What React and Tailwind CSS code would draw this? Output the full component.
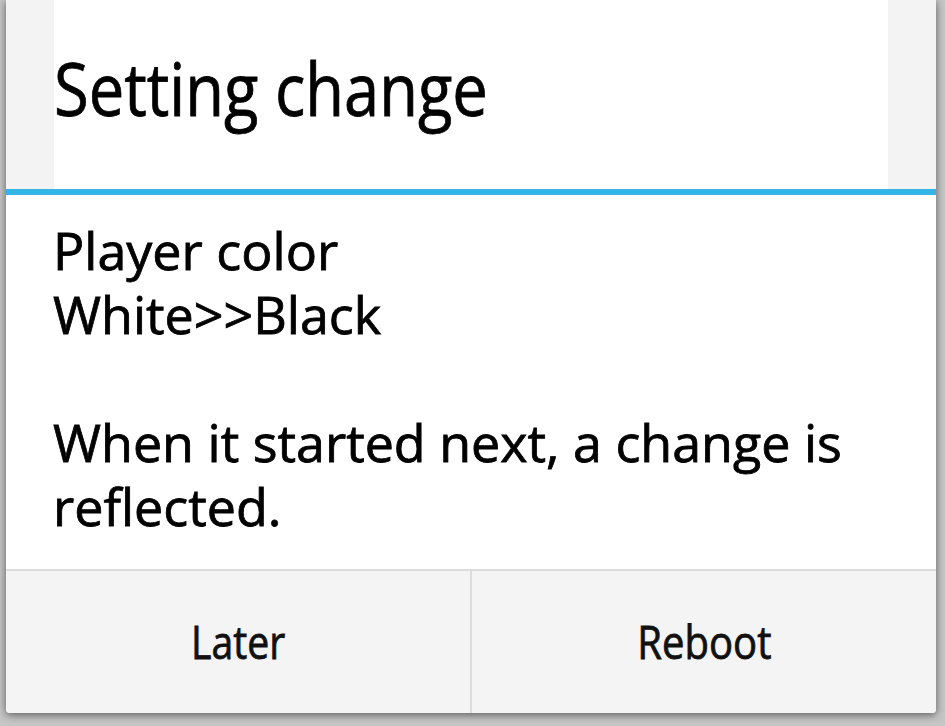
const Dialog = () => {
  return (
    <div className="ml-[6px] w-[930px] h-[713px] flex flex-col bg-white rounded-b-[4px] overflow-hidden shadow-[0_2px_8px_rgba(0,0,0,0.55)]">
      {/* title */}
      <div className="h-[189px] flex bg-[#f3f3f3] px-[48px]">
        <div className="flex-1 bg-white pt-[51px]">
          <h1 className="inline-block origin-left scale-x-[0.855] text-[74px] leading-[74px] text-black whitespace-nowrap">
            Setting change
          </h1>
        </div>
      </div>
      <div className="h-[6px] bg-[#33b5e5]" />

      {/* message */}
      <div className="h-[374px] pt-[23px] pl-[47px] text-[52px] leading-[64px] text-black whitespace-nowrap">
        <p>Player color</p>
        <p>White&gt;&gt;Black</p>
        <p>&nbsp;</p>
        <p>When it started next, a change is</p>
        <p>reflected.</p>
      </div>

      {/* buttons */}
      <div className="flex-1 flex border-t-2 border-[#dcdcdc] bg-[#f4f4f4]">
        <button className="flex-1 flex items-center justify-center text-[45px] text-[#111]">
          <span className="inline-block scale-x-[0.87]">Later</span>
        </button>
        <div className="w-[2px] bg-[#dcdcdc]" />
        <button className="flex-1 flex items-center justify-center text-[45px] text-[#111]">
          <span className="inline-block scale-x-[0.89]">Reboot</span>
        </button>
      </div>
    </div>
  );
};

export default function App() {
  return (
    <div className="w-[945px] h-[726px] overflow-hidden bg-[#c6c6c6] font-['Open_Sans',sans-serif] font-stretch-[92%] [-webkit-text-stroke:0.8px_currentColor]">
      <Dialog />
    </div>
  );
}
